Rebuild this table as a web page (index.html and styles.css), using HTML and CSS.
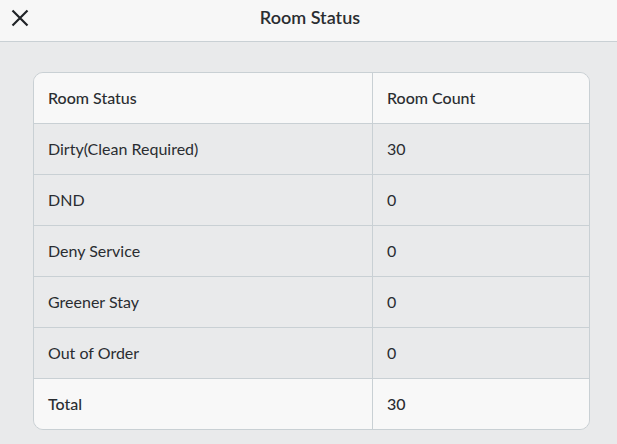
FILE: index.html
```html
<!DOCTYPE html>
<html lang="en">

<head>
    <meta charset="UTF-8">
    <meta name="viewport" content="width=device-width, initial-scale=1.0">
    <title>Room Status</title>
    <link rel="stylesheet" href="styles.css">
</head>

<body>
    <div class="topbar">
        <button class="close-btn" aria-label="Close">
            <svg width="18" height="18" viewBox="0 0 18 18">
                <path d="M1.5 1.5 L16.5 16.5 M16.5 1.5 L1.5 16.5" stroke="#202327" stroke-width="2.2" stroke-linecap="butt" fill="none"/>
            </svg>
        </button>
        <div class="title">Room Status</div>
    </div>

    <div class="content">
        <div class="status-table">
            <div class="row head">
                <div class="cell">Room Status</div>
                <div class="cell">Room Count</div>
            </div>
            <div class="row">
                <div class="cell">Dirty(Clean Required)</div>
                <div class="cell">30</div>
            </div>
            <div class="row">
                <div class="cell">DND</div>
                <div class="cell">0</div>
            </div>
            <div class="row">
                <div class="cell">Deny Service</div>
                <div class="cell">0</div>
            </div>
            <div class="row">
                <div class="cell">Greener Stay</div>
                <div class="cell">0</div>
            </div>
            <div class="row">
                <div class="cell">Out of Order</div>
                <div class="cell">0</div>
            </div>
            <div class="row total">
                <div class="cell">Total</div>
                <div class="cell">30</div>
            </div>
        </div>
    </div>
</body>

</html>
```

FILE: styles.css
```css
body {
    margin: 0;
    background-color: #e9eaeb;
    font-family: Lato, "Liberation Sans", sans-serif;
    color: #2a2d31;
}

.topbar {
    position: relative;
    height: 41px;
    background-color: #f7f7f7;
    border-bottom: 1px solid #c9d0d4;
    display: flex;
    align-items: center;
    justify-content: center;
}

.close-btn {
    position: absolute;
    left: 11px;
    top: 9px;
    padding: 0;
    border: none;
    background: none;
    width: 18px;
    height: 18px;
    cursor: pointer;
}

.close-btn svg {
    display: block;
}

.title {
    font-size: 18px;
    font-weight: 600;
    color: #2a2d31;
    margin-left: 3px;
    margin-top: -7px;
}

.content {
    padding: 30px 27px 0 33px;
}

.status-table {
    border: 1px solid #c9d0d4;
    border-radius: 10px;
    overflow: hidden;
}

.row {
    display: grid;
    grid-template-columns: 338px 1fr;
    height: 50px;
    border-top: 1px solid #c9d0d4;
    background-color: #e9eaeb;
}

.row.head {
    border-top: none;
    background-color: #f8f8f8;
}

.row.total {
    background-color: #f8f8f8;
}

.cell {
    display: flex;
    align-items: center;
    padding: 0 0 2px 14px;
    font-size: 16px;
}

.cell + .cell {
    border-left: 1px solid #c9d0d4;
}

.head .cell,
.total .cell {
    font-weight: 500;
}
```
